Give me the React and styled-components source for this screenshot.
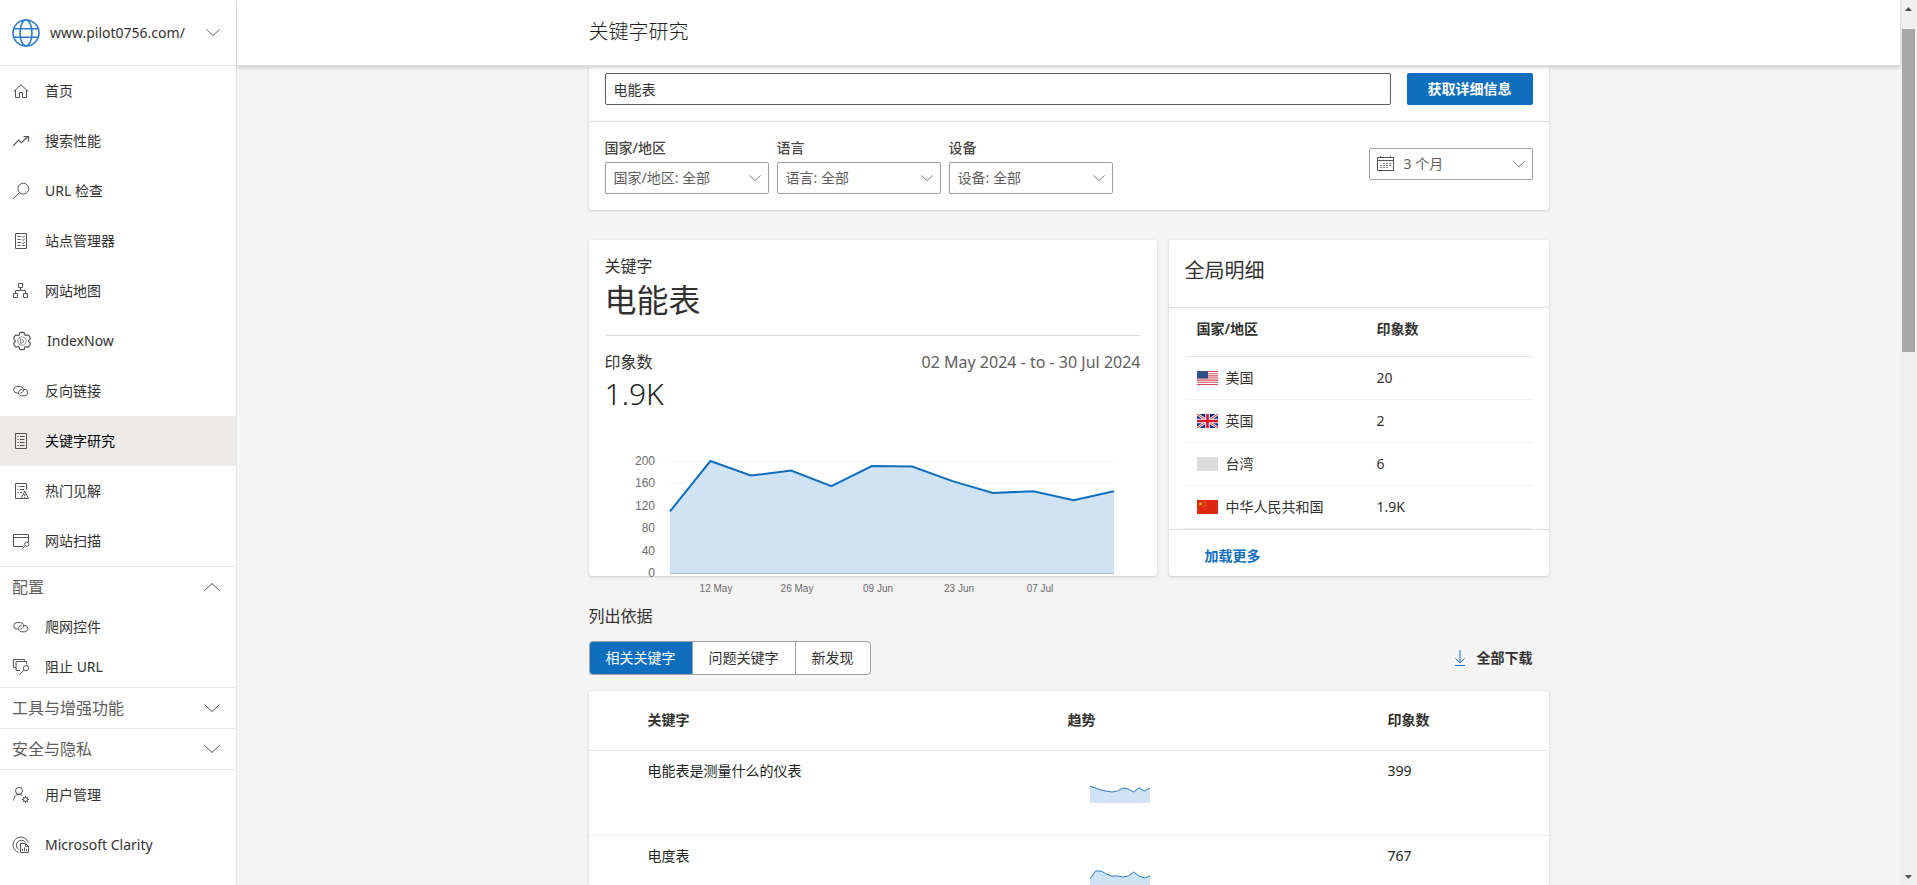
import React, { useState } from 'react';
import styled, { createGlobalStyle } from 'styled-components';

const GlobalStyle = createGlobalStyle`
    * {
        box-sizing: border-box;
    }

    body {
        margin: 0;
        background: #f4f4f4;
        color: #323130;
        font-family: "Noto Sans", "Noto Sans CJK SC", sans-serif;
        font-size: 14px;
        line-height: 20px;
    }

    button, input, select {
        font: inherit;
        color: inherit;
    }
`;

/* ---------- icons ---------- */

const Svg = styled.svg`
    display: block;
    flex: none;
    overflow: visible;
    fill: none;
    stroke: ${(p) => p.$color || '#55524f'};
    stroke-width: 1;
`;

// outline of a cog with n rounded teeth
const cog = (cx, cy, r, depth, n) => {
    const pts = [];
    for (let i = 0; i < 120; i++) {
        const a = (i / 120) * Math.PI * 2;
        const wave = Math.max(-1, Math.min(0.6, Math.cos(a * n) * 1.5 + 0.5));
        const d = r + wave * depth;
        pts.push(`${(cx + Math.sin(a) * d).toFixed(2)},${(cy - Math.cos(a) * d).toFixed(2)}`);
    }
    return `M${pts.join('L')}Z`;
};

const icons = {
    home: <path d="M1.7 9.6 9 2.8l7.3 6.8M3.5 8v7.5h4v-5h3v5h4V8" />,
    trend: <path strokeWidth="1.2" d="M1 13.8 6.7 8l2.6 2.6 7-6.4M11.5 4.5h5v5" />,
    search: <><circle cx="11.3" cy="6.6" r="5.4" /><path d="M7.4 10.5 1 16.9" /></>,
    manager: <path d="M3.5 1.5h11v15h-11zM5.5 4.5h3M5.5 7.5h3M5.5 10.5h3M5.5 13.5h3M10 4.5l1 1 2-2M10 7.5l1 1 2-2M10 10.5l1 1 2-2M10.5 13.5h2.5" />,
    sitemap: <path d="M6.5 1.5h4v4h-4zM8.5 5.5v3M3.5 11.5v-3h10v3M1.5 11.5h4v4h-4zM11.5 11.5h4v4h-4z" />,
    indexNow: (
        <>
            <path strokeWidth="1.2" d={cog(10, 9, 7.9, 1.3, 6)} />
            <circle cx="10" cy="9" r="4.2" strokeOpacity=".6" />
            <path strokeOpacity=".7" d="M8.7 6v5.5l2.8-1.4V8.6L9.8 7.8" />
        </>
    ),
    link: <path d="M6.2 11H4.9a3.2 3.2 0 0 1 0-6.4h3.4a3.2 3.2 0 0 1 2.8 4.8A3.2 3.2 0 0 1 8.3 11M11.8 7.5h1.3a3.2 3.2 0 0 1 0 6.3H9.7a3.2 3.2 0 0 1-2.8-4.7 3.2 3.2 0 0 1 2.8-1.6" />,
    keyword: <path d="M3.5 1.5h11v15h-11zM5.5 4.5h1M8 4.5h4.5M5.5 7.5h1M8 7.5h4.5M5.5 10.5h1M8 10.5h4.5M5.5 13.5h1M8 13.5h4.5" />,
    insight: <path d="M9.5 16.5h-6v-15h11v6M5.5 4.5h1M8 4.5h4.5M5.5 7.5h1M8 7.5h4M5.5 10.5h1M8 10.5h2M12.8 9.2l-3.7 7.3h7.4zM12.8 11.8v2.4M12.8 15v1" />,
    scan: <><path d="M11 14.5H1.5v-12h15v7.5M1.5 5.5h15" /><circle cx="14.8" cy="12.2" r="2.1" /><path d="M13.3 13.7 10.3 16.6" /></>,
    block: <><path d="M4 9.5H1.5v-8h11V3M8 12.5H4v-9h10.5v3" /><circle cx="13.9" cy="10.2" r="2.6" /><path d="M12 12.1 7.5 16.5" /></>,
    user: <><circle cx="7" cy="4.8" r="3.5" /><path d="M1.5 14.5c.4-3.6 2.7-6.2 5.5-6.2 1.3 0 2.4.5 3.3 1.3" /><circle cx="13.5" cy="13.5" r="2" /><path d="M13.5 10v1.5M13.5 15.5V17M10 13.5h1.5M15.5 13.5H17M11 11l1 1M15 15l1 1M16 11l-1 1M12 15l-1 1" /></>,
    clarity: <><path d="M6.5 16.3A7.8 7.8 0 1 1 16.3 6.5M6.8 13.5A5 5 0 1 1 13.6 6.5" /><path d="M8.5 16.5v-9h5l3 3v6zM13.5 7.5v3h3M10.5 12.5v2.5M12.5 11.5v3.5M14.5 13v2" /></>,
};

const NavIcon = ({ name }) => {
    const width = name === 'indexNow' ? 20 : 18;
    return <Svg width={width} height="18" viewBox={`0 0 ${width} 18`} aria-hidden="true">{icons[name]}</Svg>;
};

const Chevron = ({ size = 16, up }) => (
    <Svg width={size} height={size / 2} viewBox="0 0 16 8" aria-hidden="true">
        <path d={up ? 'M.5 7.5 8 .5l7.5 7' : 'M.5.5 8 7.5l7.5-7'} />
    </Svg>
);

const Globe = () => (
    <Svg $color="#2b7bcb" width="28" height="28" viewBox="0 0 28 28" aria-hidden="true">
        <g strokeWidth="1.6">
            <circle cx="14" cy="14" r="13" />
            <ellipse cx="14" cy="14" rx="6" ry="13" />
            <path d="M1.8 9.7h24.4M1.8 18.3h24.4" />
        </g>
    </Svg>
);

const flags = {
    us: (
        <>
            <path fill="#fff" d="M0 0h21v14H0z" />
            <path fill="#d0485a" d="M0 0h21v1H0zM0 2.2h21v1H0zM0 4.3h21v1.1H0zM0 6.5h21v1H0zM0 8.6h21v1.1H0zM0 10.8h21v1H0zM0 12.9h21V14H0z" />
            <path fill="#2f5088" d="M0 0h11v7.5H0z" />
        </>
    ),
    gb: (
        <>
            <path fill="#142a8c" d="M0 0h21v14H0z" />
            <path stroke="#fff" strokeWidth="2.6" d="M0 0l21 14M21 0L0 14" />
            <path stroke="#d22" strokeWidth="1" d="M0 0l21 14M21 0L0 14" />
            <path stroke="#fff" strokeWidth="4.5" d="M10.5 0v14M0 7h21" />
            <path stroke="#d8122c" strokeWidth="2.6" d="M10.5 0v14M0 7h21" />
        </>
    ),
    tw: <path fill="#ddd" d="M0 0h21v14H0z" />,
    cn: (
        <>
            <path fill="#de2910" d="M0 0h21v14H0z" />
            <path fill="#ffde00" d="M3.5 1.8l.5 1.5h1.5l-1.2.9.5 1.5-1.3-.9-1.3.9.5-1.5L1.5 3.3H3z" />
            <path fill="#ffb000" d="M6.5 1h1v1h-1zM8.2 2.5h1v1h-1zM8.2 4.7h1v1h-1zM6.5 6.2h1v1h-1z" />
        </>
    ),
};

const FlagSvg = styled.svg`
    display: block;
    flex: none;
`;

/* ---------- data ---------- */

const mainNav = [
    ['home', '首页'],
    ['trend', '搜索性能'],
    ['search', 'URL 检查'],
    ['manager', '站点管理器'],
    ['sitemap', '网站地图'],
    ['indexNow', 'IndexNow'],
    ['link', '反向链接'],
    ['keyword', '关键字研究'],
    ['insight', '热门见解'],
    ['scan', '网站扫描'],
];

const filters = [
    ['country', '国家/地区'],
    ['language', '语言'],
    ['device', '设备'],
];

const weekly = [110, 200, 174, 183, 155, 191, 190, 164, 143, 146, 130, 146];
const weekLabels = ['12 May', '26 May', '09 Jun', '23 Jun', '07 Jul'];

const countries = [
    ['us', '美国', '20'],
    ['gb', '英国', '2'],
    ['tw', '台湾', '6'],
    ['cn', '中华人民共和国', '1.9K'],
];

const tabs = ['相关关键字', '问题关键字', '新发现'];

const keywords = [
    { name: '电能表是测量什么的仪表', count: '399', trend: [17, 15, 13, 12, 11, 12, 15, 14, 11, 15, 12, 15] },
    { name: '电度表', count: '767', trend: [9, 17, 17, 14, 12, 12, 11, 12, 16, 12, 10, 12] },
];

/* ---------- shell ---------- */

const Shell = styled.div`
    display: flex;
    height: 100vh;
    overflow: hidden;
`;

const Sidebar = styled.nav`
    flex: none;
    width: 237px;
    background: #fff;
    border-right: 1px solid #e6e6e6;
`;

const SitePicker = styled.button`
    display: flex;
    align-items: center;
    gap: 10px;
    width: 100%;
    height: 66px;
    padding: 0 16px 0 12px;
    border: 0;
    border-bottom: 1px solid #e6e6e6;
    background: none;
    text-align: left;

    span {
        flex: 1;
    }
`;

const NavItem = styled.a`
    display: flex;
    align-items: center;
    gap: 15px;
    height: ${(p) => (p.$compact ? '40px' : '50px')};
    padding: 0 12px;
    background: ${(p) => (p.$active ? '#ebeae9' : 'transparent')};
    color: ${(p) => (p.$active ? '#000' : '#323130')};
    text-decoration: none;
`;

const NavGroup = styled.section`
    border-top: 1px solid #e6e6e6;
`;

const NavGroupTitle = styled.button`
    display: flex;
    align-items: center;
    justify-content: space-between;
    width: 100%;
    height: 40px;
    padding: 0 16px 0 12px;
    border: 0;
    background: none;
    color: #605e5c;
    font-size: 16px;
`;

const Main = styled.main`
    flex: 1;
    min-width: 0;
`;

const TopBar = styled.header`
    position: relative;
    z-index: 1;
    height: 67px;
    padding: 10px 0;
    background: #fff;
    border-bottom: 2px solid #dcdcdc;
    box-shadow: 0 1px 3px rgba(0, 0, 0, 0.16);
`;

const Container = styled.div`
    max-width: 960px;
    margin: 0 auto;
`;

const PageTitle = styled.h1`
    margin: 0;
    color: #201f1e;
    font-size: 20px;
    font-weight: 300;
    line-height: 44px;
`;

const ScrollTrack = styled.div`
    display: flex;
    flex-direction: column;
    flex: none;
    align-items: center;
    width: 17px;
    padding: 7px 0 6px;
    background: #f0f0f0;
`;

const ScrollThumb = styled.div`
    width: 13px;
    height: 37%;
    margin: 18px 0 auto;
    background: #a8a8a8;
`;

const Arrow = styled.svg`
    flex: none;
    fill: #505050;
`;

/* ---------- cards ---------- */

const Card = styled.section`
    background: #fff;
    border-radius: 2px;
    box-shadow: 0 1px 3px rgba(0, 0, 0, 0.16), 0 0 1px rgba(0, 0, 0, 0.14);
`;

const SearchRow = styled.form`
    display: flex;
    gap: 16px;
    padding: 6px 16px 16px;
    border-bottom: 1px solid #dcdcdc;
`;

const SearchInput = styled.input`
    flex: 1;
    height: 32px;
    padding: 0 8px;
    border: 1px solid #605e5c;
    border-radius: 2px;
    background: #fff;
`;

const PrimaryButton = styled.button`
    width: 126px;
    height: 32px;
    padding: 0;
    border: 0;
    border-radius: 2px;
    background: #106ebe;
    color: #fff;
    font-weight: 600;
`;

const FilterRow = styled.div`
    display: flex;
    align-items: flex-start;
    gap: 8px;
    padding: 16px;
`;

const Field = styled.div`
    display: flex;
    flex-direction: column;
    gap: 4px;
    color: #605e5c;
`;

const FieldLabel = styled.label`
    color: #484644;
    font-weight: 500;
`;

const SelectBox = styled.div`
    display: grid;
    align-items: center;
    width: 164px;
    color: #605e5c;

    > * {
        grid-area: 1 / 1;
    }

    > svg {
        margin: 0 8px;
        pointer-events: none;
    }

    > svg:last-child {
        justify-self: end;
    }
`;

const Select = styled.select`
    width: 100%;
    height: 32px;
    padding: 0 28px 0 ${(p) => (p.$icon ? '34px' : '8px')};
    border: 1px solid #a19f9d;
    border-radius: 2px;
    background: #fff;
    appearance: none;
`;

const DateField = styled.div`
    margin: 10px 0 0 auto;
`;

const Overview = styled.div`
    display: grid;
    grid-template-columns: 568fr 380fr;
    gap: 12px;
    margin: 30px 0;
`;

const KeywordCard = styled(Card)`
    padding: 16px 16px 0;
`;

const KeywordHead = styled.div`
    padding-bottom: 11px;
    margin-bottom: 16px;
    border-bottom: 1px solid #dcdcdc;
`;

const Caption = styled.div`
    display: flex;
    justify-content: space-between;
    font-size: 16px;

    time {
        color: #605e5c;
    }
`;

const KeywordName = styled.h2`
    margin: 0;
    font-size: 32px;
    font-weight: 400;
    line-height: 48px;
`;

const Total = styled.div`
    color: #201f1e;
    font-size: 30px;
    font-weight: 300;
    line-height: 44px;
`;

const ChartSvg = styled.svg`
    display: block;
    overflow: visible;
    font-family: "Liberation Sans", Arial, sans-serif;
    fill: #6b6b6b;
`;

const CardTitle = styled.h2`
    margin: 0;
    padding: 16px 16px 21px;
    border-bottom: 1px solid #dcdcdc;
    font-size: 20px;
    font-weight: 400;
    line-height: 30px;
`;

const CountryWrap = styled.div`
    padding: 0 16px;
`;

const CountryTable = styled.table`
    width: 100%;
    border-collapse: collapse;
    table-layout: fixed;

    th, td {
        padding: 0 12px;
        border-bottom: 1px solid #f0f0f0;
        text-align: left;
    }

    th {
        height: 48px;
        padding-top: 11px;
        border-color: #e6e6e6;
        font-weight: 600;
        vertical-align: top;
    }

    td {
        height: 43px;
    }

    th:first-child {
        width: 180px;
    }

    td:first-child {
        padding-right: 0;
    }
`;

const CountryName = styled.span`
    display: flex;
    align-items: center;
    gap: 8px;
    white-space: nowrap;
`;

const CardFooter = styled.div`
    padding: 16px 36px 10px;
    border-top: 1px solid #dcdcdc;
`;

const MoreLink = styled.a`
    color: #106ebe;
    font-weight: 600;
    text-decoration: none;
`;

/* ---------- keyword list ---------- */

const ListBar = styled.div`
    display: flex;
    align-items: center;
    justify-content: space-between;
    margin: 15px 0 16px;
    padding-right: 16px;
`;

const TabGroup = styled.div`
    display: flex;
`;

const Tab = styled.button`
    height: 34px;
    padding: 0 16px;
    border: 1px solid #a0a0a0;
    background: ${(p) => (p.$active ? '#106ebe' : '#fff')};
    color: ${(p) => (p.$active ? '#fff' : '#323130')};

    &:first-child {
        border-radius: 4px 0 0 4px;
    }

    &:last-child {
        border-radius: 0 4px 4px 0;
    }

    & + & {
        margin-left: -1px;
    }
`;

const DownloadButton = styled.button`
    display: flex;
    align-items: center;
    gap: 12px;
    padding: 0;
    border: 0;
    background: none;
    font-weight: 600;
`;

const KeywordTable = styled.table`
    width: 100%;
    border-collapse: collapse;
    table-layout: fixed;

    th, td {
        padding: 0 12px;
        text-align: left;
    }

    th {
        height: 59px;
        border-bottom: 1px solid #e6e6e6;
        font-weight: 600;
    }

    td {
        height: 85px;
        padding-top: 10px;
        border-bottom: 1px solid #f0f0f0;
        color: #201f1e;
        vertical-align: top;
    }
`;

const Spark = styled.svg`
    display: block;
    margin: 20px 0 0 22px;
`;

const ImpressionChart = () => {
    const left = 65;
    const right = 509;
    const bottom = 157;
    const y = (v) => bottom - v * 0.56;
    const step = (right - left) / (weekly.length - 1);
    const line = weekly.map((v, i) => `${left + i * step},${y(v)}`).join(' ');

    return (
        <ChartSvg width="100%" height="160" viewBox="0 0 536 160" role="img" aria-label="印象数">
            {[200, 160, 120, 80, 40, 0].map((v) => (
                <g key={v}>
                    <path stroke="#f3f3f3" d={`M${left} ${Math.round(y(v)) + 0.5}H${right}`} />
                    <text x="50" y={y(v) + 4} fontSize="12" textAnchor="end">{v}</text>
                </g>
            ))}
            <polygon fill="#d0e3f5" points={`${left},${bottom} ${line} ${right},${bottom}`} />
            <path stroke="#b0b8c0" d={`M${left} 157.5H${right}`} />
            <polyline fill="none" stroke="#106ebe" strokeWidth="2" points={line} />
            {weekLabels.map((label, i) => (
                <text key={label} x={111 + i * 81} y="176" fontSize="10" textAnchor="middle">{label}</text>
            ))}
        </ChartSvg>
    );
};

const Sparkline = ({ values }) => {
    const line = values.map((v, i) => `${(i * 60) / (values.length - 1)},${22 - v}`).join(' ');
    return (
        <Spark width="60" height="22" viewBox="0 0 60 22" aria-hidden="true">
            <polygon fill="#d0e3f5" points={`0,22 ${line} 60,22`} />
            <polyline fill="none" stroke="#2b7bc4" points={line} />
        </Spark>
    );
};

const App = () => {
    const [query, setQuery] = useState('电能表');
    const [tab, setTab] = useState(0);

    return (
        <Shell>
            <GlobalStyle />
            <Sidebar>
                <SitePicker type="button">
                    <Globe />
                    <span>www.pilot0756.com/</span>
                    <Chevron size={14} />
                </SitePicker>
                {mainNav.map(([icon, label]) => (
                    <NavItem key={icon} href="#" $active={icon === 'keyword'}>
                        <NavIcon name={icon} />
                        {label}
                    </NavItem>
                ))}
                <NavGroup>
                    <NavGroupTitle type="button">配置<Chevron up /></NavGroupTitle>
                    <NavItem href="#" $compact><NavIcon name="link" />爬网控件</NavItem>
                    <NavItem href="#" $compact><NavIcon name="block" />阻止 URL</NavItem>
                </NavGroup>
                <NavGroup>
                    <NavGroupTitle type="button">工具与增强功能<Chevron /></NavGroupTitle>
                </NavGroup>
                <NavGroup>
                    <NavGroupTitle type="button">安全与隐私<Chevron /></NavGroupTitle>
                </NavGroup>
                <NavGroup>
                    <NavItem href="#"><NavIcon name="user" />用户管理</NavItem>
                    <NavItem href="#"><NavIcon name="clarity" />Microsoft Clarity</NavItem>
                </NavGroup>
            </Sidebar>

            <Main>
                <TopBar>
                    <Container>
                        <PageTitle>关键字研究</PageTitle>
                    </Container>
                </TopBar>
                <Container>
                    <Card>
                        <SearchRow onSubmit={(e) => e.preventDefault()}>
                            <SearchInput aria-label="关键字" value={query} onChange={(e) => setQuery(e.target.value)} />
                            <PrimaryButton type="submit">获取详细信息</PrimaryButton>
                        </SearchRow>
                        <FilterRow>
                            {filters.map(([id, label]) => (
                                <Field key={id}>
                                    <FieldLabel htmlFor={id}>{label}</FieldLabel>
                                    <SelectBox>
                                        <Select id={id}>
                                            <option>{label}: 全部</option>
                                        </Select>
                                        <Chevron size={12} />
                                    </SelectBox>
                                </Field>
                            ))}
                            <DateField>
                                <SelectBox>
                                    <Select $icon aria-label="时间范围">
                                        <option>3 个月</option>
                                    </Select>
                                    <Svg width="17" height="16" viewBox="0 0 17 16" aria-hidden="true">
                                        <path d="M.5 1.5h16v13H.5zM.5 4.5h16M3.5 0v2M13.5 0v2" />
                                        <path strokeDasharray="2 1" d="M6 7.5h8M3 9.5h11M3 11.5h8" strokeOpacity=".7" />
                                    </Svg>
                                    <Chevron size={12} />
                                </SelectBox>
                            </DateField>
                        </FilterRow>
                    </Card>

                    <Overview>
                        <KeywordCard>
                            <KeywordHead>
                                <Caption>关键字</Caption>
                                <KeywordName>电能表</KeywordName>
                            </KeywordHead>
                            <Caption>
                                印象数
                                <time>02 May 2024 - to - 30 Jul 2024</time>
                            </Caption>
                            <Total>1.9K</Total>
                            <ImpressionChart />
                        </KeywordCard>
                        <Card>
                            <CardTitle>全局明细</CardTitle>
                            <CountryWrap>
                                <CountryTable>
                                    <thead>
                                        <tr>
                                            <th>国家/地区</th>
                                            <th>印象数</th>
                                        </tr>
                                    </thead>
                                    <tbody>
                                        {countries.map(([code, name, count]) => (
                                            <tr key={code}>
                                                <td>
                                                    <CountryName>
                                                        <FlagSvg width="21" height="14" viewBox="0 0 21 14" aria-hidden="true">{flags[code]}</FlagSvg>
                                                        {name}
                                                    </CountryName>
                                                </td>
                                                <td>{count}</td>
                                            </tr>
                                        ))}
                                    </tbody>
                                </CountryTable>
                            </CountryWrap>
                            <CardFooter>
                                <MoreLink href="#">加载更多</MoreLink>
                            </CardFooter>
                        </Card>
                    </Overview>

                    <Caption>列出依据</Caption>
                    <ListBar>
                        <TabGroup>
                            {tabs.map((name, i) => (
                                <Tab key={name} type="button" $active={i === tab} onClick={() => setTab(i)}>{name}</Tab>
                            ))}
                        </TabGroup>
                        <DownloadButton type="button">
                            <Svg $color="#106ebe" width="10" height="16" viewBox="0 0 10 16" aria-hidden="true">
                                <path d="M5 0v12.5M.5 8.5 5 12.8l4.5-4.3M0 15.5h10" />
                            </Svg>
                            全部下载
                        </DownloadButton>
                    </ListBar>
                    <Card>
                        <KeywordTable>
                            <colgroup>
                                <col width="47" />
                                <col width="43.75%" />
                                <col width="33.33%" />
                                <col />
                            </colgroup>
                            <thead>
                                <tr>
                                    <th />
                                    <th>关键字</th>
                                    <th>趋势</th>
                                    <th>印象数</th>
                                </tr>
                            </thead>
                            <tbody>
                                {keywords.map((row) => (
                                    <tr key={row.name}>
                                        <td />
                                        <td>{row.name}</td>
                                        <td><Sparkline values={row.trend} /></td>
                                        <td>{row.count}</td>
                                    </tr>
                                ))}
                            </tbody>
                        </KeywordTable>
                    </Card>
                </Container>
            </Main>

            <ScrollTrack>
                <Arrow width="7" height="4" viewBox="0 0 7 4" aria-hidden="true"><path d="M0 4h7L3.5 0z" /></Arrow>
                <ScrollThumb />
                <Arrow width="7" height="4" viewBox="0 0 7 4" aria-hidden="true"><path d="M0 0h7L3.5 4z" /></Arrow>
            </ScrollTrack>
        </Shell>
    );
};

export default App;
